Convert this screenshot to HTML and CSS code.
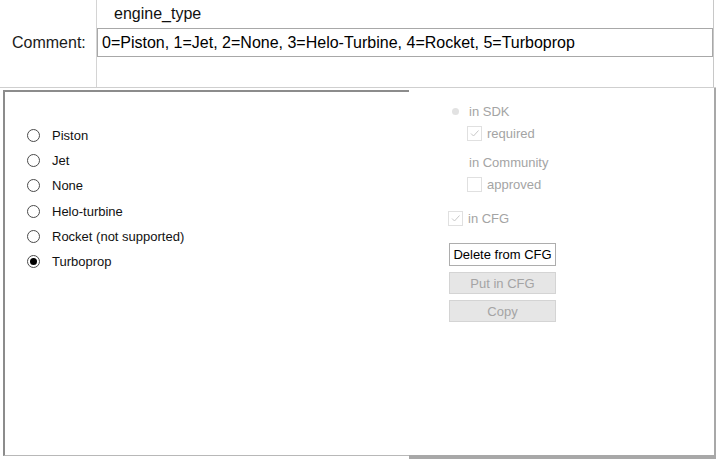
FILE: index.html
```html
<!DOCTYPE html>
<html>
<head>
<meta charset="utf-8">
<link rel="stylesheet" href="styles.css">
</head>
<body>
<div class="top">
  <div class="label-col">
    <span class="comment-label">Comment:</span>
  </div>
  <div class="field-col">
    <div class="name">engine_type</div>
    <div class="comment-box">0=Piston, 1=Jet, 2=None, 3=Helo-Turbine, 4=Rocket, 5=Turboprop</div>
  </div>
</div>
<div class="bottom">
  <div class="left-pane">
    <ul class="radios">
      <li><span class="radio"></span>Piston</li>
      <li><span class="radio"></span>Jet</li>
      <li><span class="radio"></span>None</li>
      <li><span class="radio"></span>Helo-turbine</li>
      <li><span class="radio"></span>Rocket (not supported)</li>
      <li><span class="radio checked"></span>Turboprop</li>
    </ul>
  </div>
  <div class="right-pane">
    <div class="opt opt-radio"><span class="dis-radio dot"></span>in SDK</div>
    <div class="opt opt-sub"><span class="dis-check"><svg width="11" height="11" viewBox="0 0 11 11"><path d="M2 5.5 L4.5 8 L9.5 2.5" fill="none" stroke="#c8c8c8" stroke-width="1"/></svg></span>required</div>
    <div class="opt opt-radio opt-gap"><span class="dis-radio"></span>in Community</div>
    <div class="opt opt-sub"><span class="dis-check"></span>approved</div>
    <div class="opt opt-cfg"><span class="dis-check"><svg width="11" height="11" viewBox="0 0 11 11"><path d="M2 5.5 L4.5 8 L9.5 2.5" fill="none" stroke="#c8c8c8" stroke-width="1"/></svg></span>in CFG</div>
    <div class="buttons">
      <div class="btn">Delete from CFG</div>
      <div class="btn disabled">Put in CFG</div>
      <div class="btn disabled">Copy</div>
    </div>
  </div>
</div>
</body>
</html>
```
FILE: styles.css
```css
html, body {
  margin: 0;
  padding: 0;
  background: #ffffff;
}
body {
  width: 716px;
  height: 459px;
  overflow: hidden;
  font-family: "Liberation Sans", Arial, sans-serif;
  color: #000;
}
.top {
  display: flex;
  height: 87px;
  border-bottom: 1px solid #cfcfcf;
}
.label-col {
  width: 97px;
  border-right: 1px solid #d4d4d4;
  box-sizing: border-box;
  padding-top: 34px;
  padding-left: 12px;
}
.comment-label {
  font-size: 16px;
  color: #1a1a1a;
}
.field-col {
  width: 617px;
  border-right: 1px solid #c8c8c8;
  box-sizing: border-box;
}
.name {
  font-size: 16px;
  height: 28px;
  line-height: 27px;
  padding-left: 17px;
  color: #111;
}
.comment-box {
  height: 29px;
  box-sizing: border-box;
  border: 1px solid #a8a8a8;
  font-size: 16px;
  line-height: 27px;
  padding-left: 4px;
  color: #000;
}
.bottom {
  display: flex;
  height: 371px;
}
.left-pane {
  width: 406px;
  margin-left: 3px;
  margin-top: 2px;
  height: 366px;
  border-left: 2px solid #8c8c8c;
  border-top: 2px solid #8c8c8c;
  border-bottom: 1px solid #b8b8b8;
  box-sizing: border-box;
}
.radios {
  list-style: none;
  margin: 0;
  padding: 31px 0 0 22px;
  font-size: 13px;
}
.radios li {
  display: flex;
  align-items: center;
  height: 25.2px;
  color: #111;
}
.radio {
  width: 13px;
  height: 13px;
  box-sizing: border-box;
  border: 1px solid #4a4a4a;
  border-radius: 50%;
  margin-right: 12px;
  display: flex;
  align-items: center;
  justify-content: center;
  background: #fff;
}
.radio.checked::after {
  content: "";
  width: 7px;
  height: 7px;
  border-radius: 50%;
  background: #000;
}
.right-pane {
  flex: 1;
  border-right: 2px solid #a8a8a8;
  border-bottom: 4px solid #a8a8a8;
  box-sizing: border-box;
  padding-top: 15px;
  padding-left: 40px;
  font-size: 13px;
  color: #a4a4a4;
}
.opt {
  display: flex;
  align-items: center;
  height: 16px;
}
.opt-radio {
  padding-left: 1px;
}
.dis-radio {
  width: 11px;
  height: 11px;
  margin-right: 8px;
  display: flex;
  align-items: center;
  justify-content: center;
}
.dis-radio.dot::after {
  content: "";
  width: 7px;
  height: 7px;
  border-radius: 50%;
  background: #e2e2e2;
}
.opt-sub {
  padding-left: 18px;
  margin-top: 7px;
  height: 15px;
}
.dis-check {
  width: 15px;
  height: 15px;
  box-sizing: border-box;
  border: 1px solid #e0e0e0;
  margin-right: 5px;
  display: flex;
  align-items: center;
  justify-content: center;
}
.opt-gap {
  margin-top: 13px;
}
.opt-cfg {
  margin-top: 19px;
  margin-left: -1px;
  height: 15px;
}
.buttons {
  margin-top: 17px;
  display: flex;
  flex-direction: column;
  gap: 6px;
  width: 107px;
}
.btn {
  height: 23px;
  box-sizing: border-box;
  border: 1px solid #adadad;
  background: #fff;
  color: #000;
  font-size: 13px;
  display: flex;
  align-items: center;
  justify-content: center;
}
.btn.disabled {
  background: #e6e6e6;
  border-color: #d4d4d4;
  color: #a4a4a4;
  height: 22px;
}
```
